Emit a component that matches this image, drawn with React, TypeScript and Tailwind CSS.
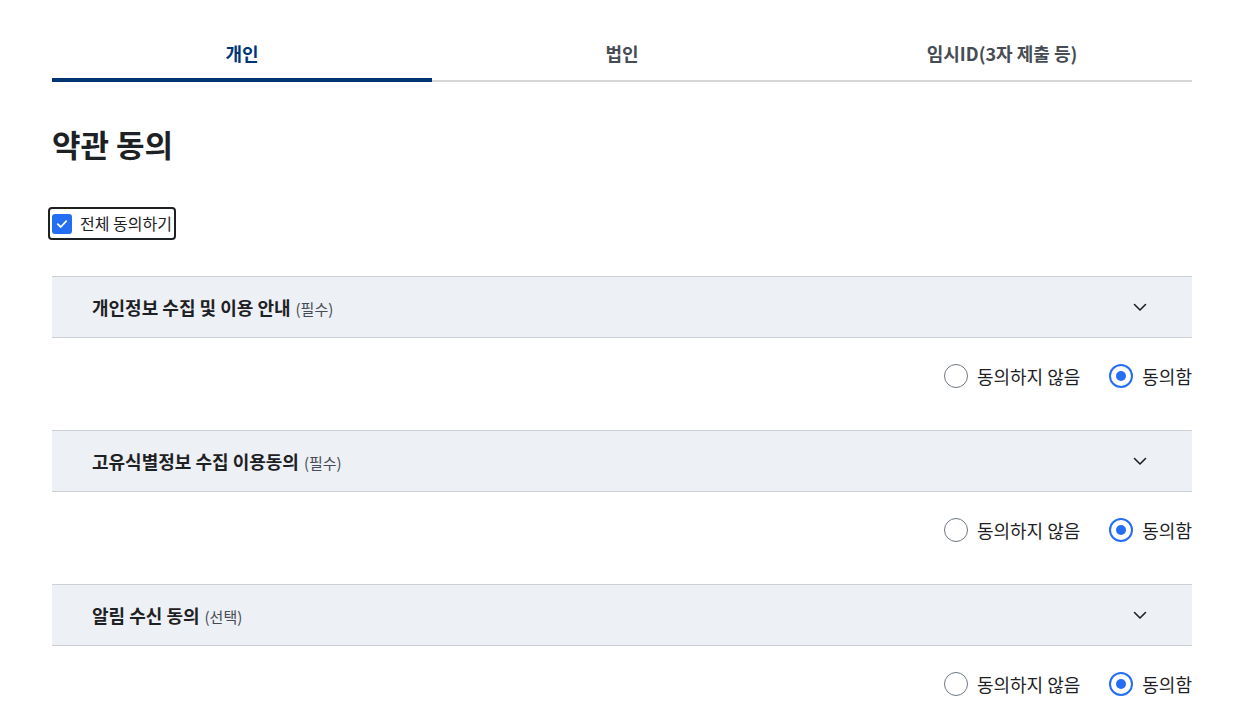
import React from "react";

const font = { fontFamily: '"Noto Sans CJK KR", "Noto Sans", sans-serif' };

function Radio({ checked, label }: { checked?: boolean; label: string }) {
  return (
    <label className="flex items-center gap-[9px] text-[18px] text-[#1e2124] leading-6">
      {checked ? (
        <span className="flex h-6 w-6 shrink-0 items-center justify-center rounded-full border-2 border-[#256ef4] bg-white">
          <span className="h-[10px] w-[10px] rounded-full bg-[#256ef4]" />
        </span>
      ) : (
        <span className="h-6 w-6 shrink-0 rounded-full border border-[#6d7882] bg-white" />
      )}
      <span>{label}</span>
    </label>
  );
}

function Section({ title, tag }: { title: string; tag: string }) {
  return (
    <div>
      <div className="flex h-[62px] items-center justify-between border-y border-[#cdd1d5] bg-[#edf0f4] pl-10 pr-[43px]">
        <div className="flex items-baseline gap-[5px]">
          <span className="text-[18px] font-bold text-[#1e2124]">{title}</span>
          <span className="text-[15px] text-[#464c53]">{tag}</span>
        </div>
        <svg width="18" height="18" viewBox="0 0 18 18" fill="none">
          <path d="M3.5 6.5 L9 12 L14.5 6.5" stroke="#1e2124" strokeWidth="1.6" strokeLinecap="round" strokeLinejoin="round" />
        </svg>
      </div>
      <div className="flex justify-end gap-[29px] pt-[26px] pb-[42px]">
        <Radio label="동의하지 않음" />
        <Radio checked label="동의함" />
      </div>
    </div>
  );
}

function Tab({ label, active }: { label: string; active?: boolean }) {
  return (
    <div className="flex h-[54px] flex-1 flex-col">
      <div
        className={
          active
            ? "flex h-[50px] items-center justify-center text-[18px] font-bold text-[#003675]"
            : "flex h-[50px] items-center justify-center text-[18px] font-bold text-[#464c53]"
        }
      >
        {label}
      </div>
      <div className="flex h-[4px] flex-col justify-end">
        {active ? (
          <div className="h-[4px] bg-[#003675]" />
        ) : (
          <div className="h-[2px] bg-[#d6d6d6]" />
        )}
      </div>
    </div>
  );
}

export default function App() {
  return (
    <div className="min-h-screen bg-white" style={font}>
      <div className="ml-[52px] w-[1140px] pt-[28px]">
        <div className="flex">
          <Tab label="개인" active />
          <Tab label="법인" />
          <Tab label="임시ID(3자 제출 등)" />
        </div>

        <h2 className="mt-[40px] text-[31px] font-bold leading-[44px] text-[#1e2124]">약관 동의</h2>

        <div className="mt-[41px] -ml-1 inline-flex items-center gap-[8px] rounded-[4px] border-2 border-[#1e2124] py-[3px] pl-[2px] pr-[2px]">
          <span className="flex h-[20px] w-[20px] items-center justify-center rounded-[3px] bg-[#256ef4]">
            <svg width="14" height="14" viewBox="0 0 14 14" fill="none">
              <path d="M2.8 7.2 L5.8 10 L11.2 4.2" stroke="white" strokeWidth="1.8" strokeLinecap="round" strokeLinejoin="round" />
            </svg>
          </span>
          <span className="text-[16px] leading-[23px] text-[#1e2124]">전체 동의하기</span>
        </div>

        <div className="mt-[36px]">
          <Section title="개인정보 수집 및 이용 안내" tag="(필수)" />
          <Section title="고유식별정보 수집 이용동의" tag="(필수)" />
          <Section title="알림 수신 동의" tag="(선택)" />
        </div>
      </div>
    </div>
  );
}
